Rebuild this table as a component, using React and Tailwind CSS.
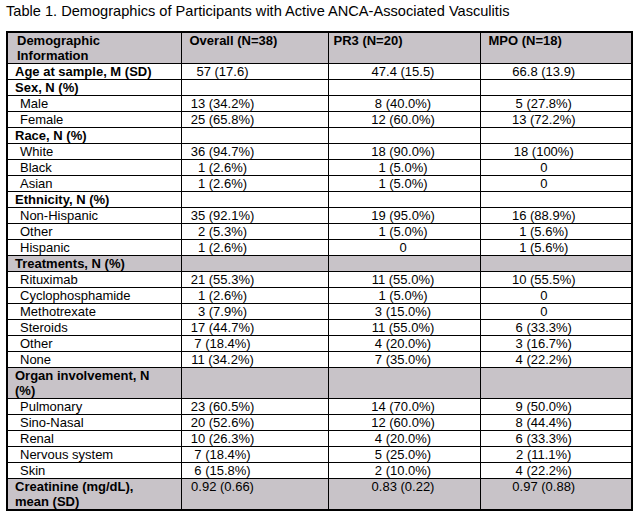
const ROWS = [
  { label: "Age at sample, M (SD)", kind: "group", v: ["57 (17.6)", "47.4 (15.5)", "66.8 (13.9)"] },
  { label: "Sex, N (%)", kind: "group" },
  { label: "Male", v: ["13 (34.2%)", "8 (40.0%)", "5 (27.8%)"] },
  { label: "Female", v: ["25 (65.8%)", "12 (60.0%)", "13 (72.2%)"] },
  { label: "Race, N (%)", kind: "group" },
  { label: "White", v: ["36 (94.7%)", "18 (90.0%)", "18 (100%)"] },
  { label: "Black", v: ["1 (2.6%)", "1 (5.0%)", "0"] },
  { label: "Asian", v: ["1 (2.6%)", "1 (5.0%)", "0"] },
  { label: "Ethnicity, N (%)", kind: "group" },
  { label: "Non-Hispanic", v: ["35 (92.1%)", "19 (95.0%)", "16 (88.9%)"] },
  { label: "Other", v: ["2 (5.3%)", "1 (5.0%)", "1 (5.6%)"] },
  { label: "Hispanic", v: ["1 (2.6%)", "0", "1 (5.6%)"] },
  { label: "Treatments, N (%)", kind: "group", shaded: true },
  { label: "Rituximab", v: ["21 (55.3%)", "11 (55.0%)", "10 (55.5%)"] },
  { label: "Cyclophosphamide", v: ["1 (2.6%)", "1 (5.0%)", "0"] },
  { label: "Methotrexate", v: ["3 (7.9%)", "3 (15.0%)", "0"] },
  { label: "Steroids", v: ["17 (44.7%)", "11 (55.0%)", "6 (33.3%)"] },
  { label: "Other", v: ["7 (18.4%)", "4 (20.0%)", "3 (16.7%)"] },
  { label: "None", v: ["11 (34.2%)", "7 (35.0%)", "4 (22.2%)"] },
  { label: "Organ involvement, N (%)", kind: "group", shaded: true, tall: true },
  { label: "Pulmonary", v: ["23 (60.5%)", "14 (70.0%)", "9 (50.0%)"] },
  { label: "Sino-Nasal", v: ["20 (52.6%)", "12 (60.0%)", "8 (44.4%)"] },
  { label: "Renal", v: ["10 (26.3%)", "4 (20.0%)", "6 (33.3%)"] },
  { label: "Nervous system", v: ["7 (18.4%)", "5 (25.0%)", "2 (11.1%)"] },
  { label: "Skin", v: ["6 (15.8%)", "2 (10.0%)", "4 (22.2%)"] },
  { label: "Creatinine (mg/dL), mean (SD)", kind: "group", shaded: true, tall: true, v: ["0.92 (0.66)", "0.83 (0.22)", "0.97 (0.88)"] },
];

const VALUE_PAD = ["pr-[64px]", "pr-[2px]", "pr-[24px]"];

function Row({ row }) {
  const shade = row.shaded ? "bg-[#c8c3c8]" : "bg-white";
  const h = row.tall ? "h-[31px]" : "h-[15px]";
  const values = row.v || ["", "", ""];
  return (
    <tr className={shade}>
      <td
        className={`${h} border border-black align-top p-0 ${
          row.kind === "group" ? "pl-[7px] font-bold" : "pl-[12px]"
        } ${row.tall ? "pr-[14px]" : "pr-0"}`}
      >
        {row.label}
      </td>
      {values.map((val, i) => (
        <td key={i} className={`${h} border border-black align-top p-0 text-center ${VALUE_PAD[i]}`}>
          {val}
        </td>
      ))}
    </tr>
  );
}

export default function App() {
  return (
    <div className="w-[637px] h-[514px] overflow-hidden bg-white text-black font-['Liberation_Sans',Arial,sans-serif]">
      <div className="pl-[6px] pt-[3px] h-[31px] text-[14.6px] leading-[17px]">
        Table 1. Demographics of Participants with Active ANCA-Associated Vasculitis
      </div>
      <table className="ml-[6px] w-[625px] table-fixed border-collapse border-2 border-black text-[13px] leading-[15px]">
        <colgroup>
          <col className="w-[174px]" />
          <col className="w-[147px]" />
          <col className="w-[152px]" />
          <col className="w-[152px]" />
        </colgroup>
        <thead>
          <tr className="bg-[#c8c3c8] font-bold">
            <td className="h-[31px] border border-black align-top p-0 pl-[9px] pr-[40px] text-left">
              Demographic Information
            </td>
            <td className="h-[31px] border border-black align-top p-0 pl-[8px] text-left">Overall (N=38)</td>
            <td className="h-[31px] border border-black align-top p-0 pl-[5px] text-left">PR3 (N=20)</td>
            <td className="h-[31px] border border-black align-top p-0 pl-[8px] text-left">MPO (N=18)</td>
          </tr>
        </thead>
        <tbody>
          {ROWS.map((row, i) => (
            <Row key={i} row={row} />
          ))}
        </tbody>
      </table>
    </div>
  );
}
